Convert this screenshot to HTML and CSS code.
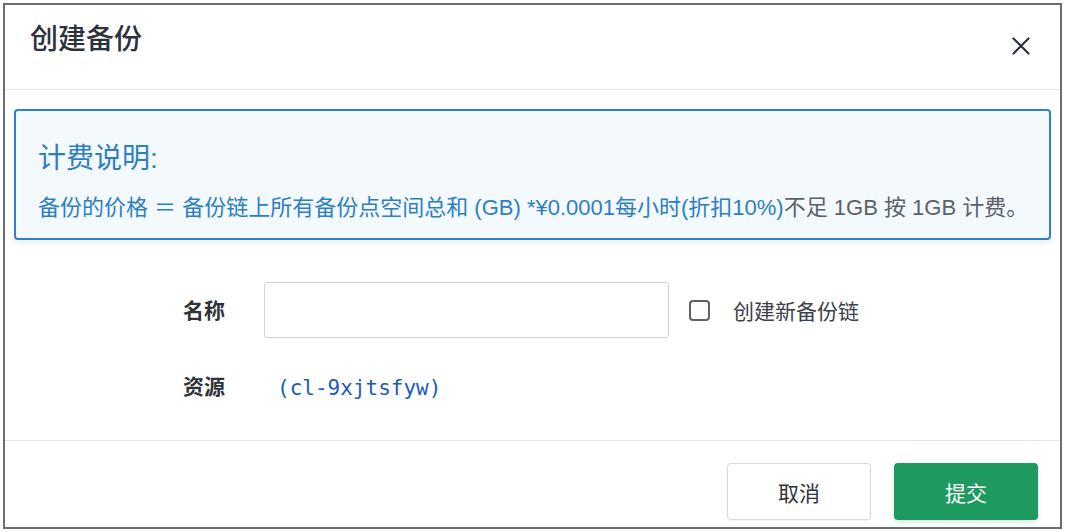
FILE: index.html
```html
<!DOCTYPE html>
<html lang="zh-CN">
<head>
  <meta charset="UTF-8" />
  <meta name="viewport" content="width=device-width, initial-scale=1.0" />
  <title>创建备份</title>
  <link rel="stylesheet" href="styles.css">
</head>
<body>
  <div class="dialog">
    <div class="dialog-header">
      <h2 class="dialog-title">创建备份</h2>
      <button class="close-btn" aria-label="关闭">
        <svg width="18" height="18" viewBox="0 0 18 18">
          <path d="M1.5 1.5 L16.5 16.5 M16.5 1.5 L1.5 16.5" stroke="currentColor" stroke-width="2.2" stroke-linecap="round" fill="none"/>
        </svg>
      </button>
    </div>

    <div class="dialog-body">
      <div class="notice">
        <div class="notice-title">计费说明:</div>
        <div class="notice-text">备份的价格 ＝ 备份链上所有备份点空间总和 (GB) *¥0.0001每小时(折扣10%)<span class="notice-muted">不足 1GB 按 1GB 计费。</span></div>
      </div>

      <div class="form">
        <div class="form-row">
          <label class="form-label" for="backupName">名称</label>
          <input type="text" id="backupName" class="text-input">
          <label class="check">
            <input type="checkbox" class="check-box">
            <span>创建新备份链</span>
          </label>
        </div>
        <div class="form-row">
          <span class="form-label">资源</span>
          <span class="resource-id">(cl-9xjtsfyw)</span>
        </div>
      </div>
    </div>

    <div class="dialog-footer">
      <button class="btn btn-cancel">取消</button>
      <button class="btn btn-submit">提交</button>
    </div>
  </div>
</body>
</html>
```

FILE: styles.css
```css
body {
  margin: 0;
  background: #fff;
  font-family: "Liberation Sans", "Noto Sans CJK SC", sans-serif;
  color: #2f353c;
}
.dialog {
  margin: 3px 0 0 3px;
  width: 1059px;
  height: 526px;
  box-sizing: border-box;
  border: 2px solid #6a6d72;
  background: #fff;
  display: flex;
  flex-direction: column;
}
.dialog-header {
  height: 85px;
  flex-shrink: 0;
  display: flex;
  justify-content: space-between;
  align-items: flex-start;
  padding: 17px 30px 0 25px;
  box-sizing: border-box;
  border-bottom: 1px solid #e3e6ea;
}
.dialog-title {
  margin: 0;
  font-size: 28px;
  line-height: 36px;
  font-weight: 500;
  color: #2b323b;
}
.close-btn {
  margin-top: 15px;
  padding: 0;
  border: none;
  background: none;
  color: #2b323b;
  width: 18px;
  height: 18px;
  display: flex;
  cursor: pointer;
}
.dialog-body {
  height: 350px;
  flex-shrink: 0;
  padding: 19px 9px 0;
  box-sizing: border-box;
}
.notice {
  border: 2px solid #2f80c5;
  border-radius: 4px;
  background: #f4f9fd;
  box-shadow: 0 3px 6px rgba(0, 0, 0, 0.08);
  padding: 31px 22px 14px;
  height: 131px;
  box-sizing: border-box;
  color: #2c7fc2;
}
.notice-title {
  font-size: 28px;
  line-height: 34px;
}
.notice-text {
  margin-top: 17px;
  font-size: 22px;
  line-height: 30px;
  white-space: nowrap;
}
.notice-muted {
  color: #59616a;
}
.form {
  margin-top: 42px;
  padding-left: 169px;
  display: flex;
  flex-direction: column;
  gap: 28px;
}
.form-row {
  display: flex;
  align-items: center;
  min-height: 40px;
}
.form-label {
  width: 81px;
  flex-shrink: 0;
  font-size: 21px;
  font-weight: 600;
  color: #2f3338;
  margin-top: -3px;
}
.text-input {
  width: 405px;
  height: 56px;
  box-sizing: border-box;
  border: 1px solid #cfd5dc;
  border-radius: 3px;
  padding: 0 12px;
  font-size: 20px;
  outline: none;
}
.text-input:focus {
  border-color: #2f80c5;
}
.check {
  margin-left: 20px;
  display: flex;
  align-items: center;
  gap: 23px;
  font-size: 21px;
  color: #3a4149;
  cursor: pointer;
}
.check-box {
  -webkit-appearance: none;
  appearance: none;
  margin: 0;
  width: 21px;
  height: 21px;
  border: 2px solid #5d6268;
  border-radius: 4px;
  background: #fff;
}
.resource-id {
  margin-left: 13px;
  margin-top: 4px;
  font-family: "DejaVu Sans Mono", monospace;
  font-size: 21px;
  color: #1e5bb8;
}
.dialog-footer {
  flex: 1;
  border-top: 1px solid #e3e6ea;
  display: flex;
  justify-content: flex-end;
  align-items: flex-start;
  gap: 23px;
  padding: 22px 22px 0 0;
}
.btn {
  width: 144px;
  height: 57px;
  font-family: inherit;
  font-size: 21px;
  border-radius: 4px;
  cursor: pointer;
}
.btn-cancel {
  background: #fff;
  color: #2f3338;
  border: 1px solid #d5dae0;
  box-shadow: 0 1px 2px rgba(0, 0, 0, 0.06);
}
.btn-submit {
  background: #1e9a61;
  color: #fff;
  border: none;
  box-shadow: 0 2px 4px rgba(30, 154, 97, 0.2);
}
.btn-submit:hover {
  background: #1a8856;
}
```
